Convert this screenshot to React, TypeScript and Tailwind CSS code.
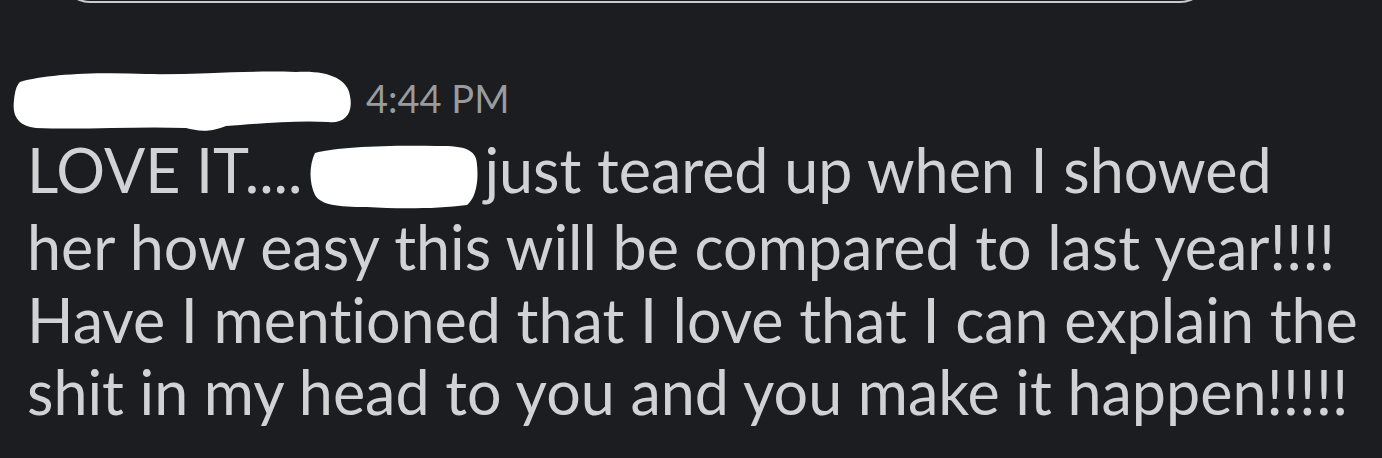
import React from 'react';

const NameScribble: React.FC = () => (
    <svg width="350" height="74" viewBox="0 0 350 74" className="block">
        <path
            d="M14 20 C40 12 90 10 140 12 C190 13 240 8 290 10 C320 8 342 16 344 34 C348 54 336 62 322 60 C290 58 250 62 220 64 C200 72 190 68 180 66 C130 64 80 68 30 66 C12 64 6 54 8 38 C9 30 10 24 14 20 Z"
            fill="#ffffff"
        />
    </svg>
);

const InlineScribble: React.FC = () => (
    <svg
        width="172"
        height="68"
        viewBox="0 0 172 68"
        className="inline-block align-[-18px] mx-[5px]"
    >
        <path
            d="M8 10 C30 4 80 2 130 3 C160 2 170 8 170 22 C172 40 168 56 160 62 C130 66 90 66 60 64 C30 64 14 62 8 52 C2 40 2 22 8 10 Z"
            fill="#ffffff"
        />
    </svg>
);

const lines = [
    'her how easy this will be compared to last year!!!!',
    'Have I mentioned that I love that I can explain the',
    'shit in my head to you and you make it happen!!!!!',
];

const App: React.FC = () => {
    return (
        <div className="w-[1382px] h-[458px] overflow-hidden bg-[#1b1d21] font-['Lato',sans-serif] [font-variant-ligatures:none]">
            {/* bottom edge of the box above */}
            <div className="ml-[60px] w-[1150px] h-[30px] -mt-[27px] rounded-b-[30px] border-x-2 border-b-2 border-[#c9cacb]" />

            <div className="pl-[27px]">
                {/* header: author + time */}
                <div className="flex items-center h-[70px] mt-[61px] -ml-[21px]">
                    <NameScribble />
                    <span className="ml-[10px] text-[38px] leading-none text-[#9a9b9d] pb-[2px]">
                        4:44 PM
                    </span>
                </div>

                {/* message body */}
                <div className="text-[61px] leading-[72.7px] text-[#d1d2d3] whitespace-nowrap">
                    <div>
                        LOVE IT....
                        <InlineScribble />
                        just teared up when I showed
                    </div>
                    {lines.map((line) => (
                        <div key={line}>{line}</div>
                    ))}
                </div>
            </div>
        </div>
    );
};

export default App;
